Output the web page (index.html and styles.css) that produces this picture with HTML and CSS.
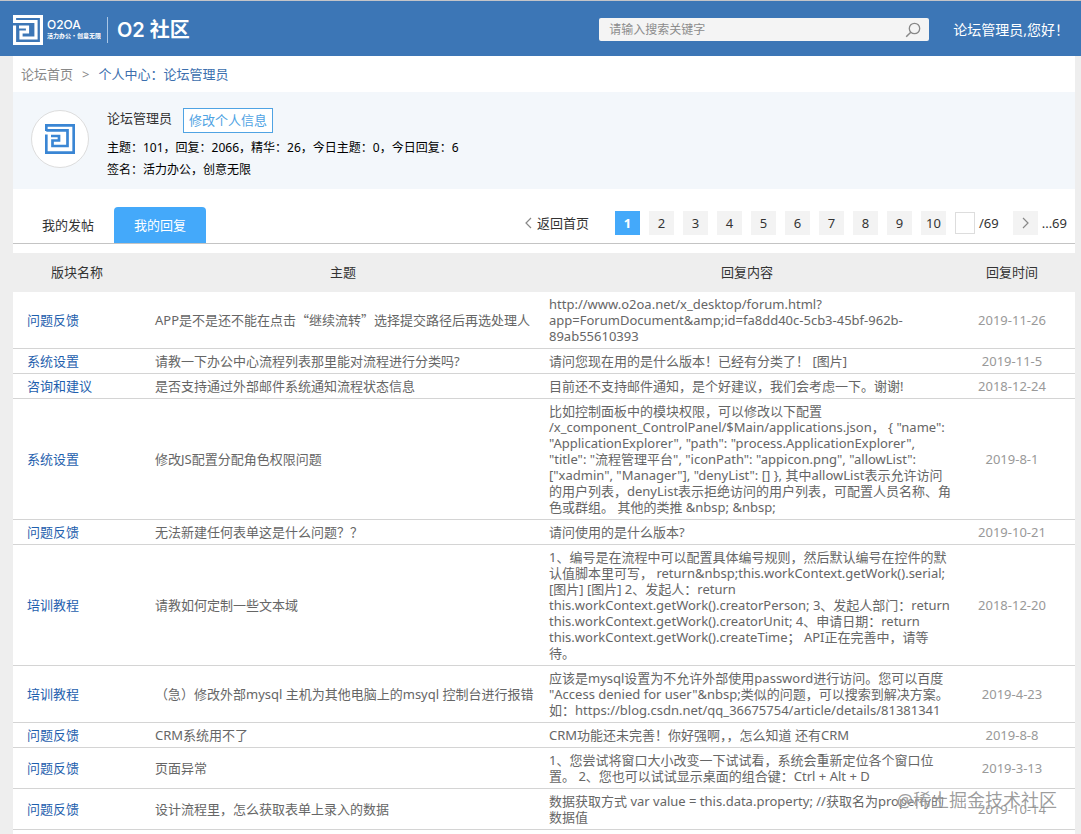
FILE: index.html
```html
<!DOCTYPE html>
<html lang="zh-CN">
<head>
<meta charset="utf-8">
<title>O2 社区</title>
<link rel="stylesheet" href="styles.css">
</head>
<body>
<header class="topbar">
  <a class="brand" href="#">
    <svg class="brand-mark" viewBox="0 0 30 30" aria-hidden="true">
      <path d="M1.500 8V1.500H28.500V28.500H1.500V10.500M1.500 6.500H23V23H8V17H14.500V12H6" fill="none" stroke="#fff" stroke-width="3.200"/>
    </svg>
    <span class="brand-text">
      <svg class="brand-words" viewBox="0 0 54 26" role="img" aria-label="O2OA 活力办公·创意无限">
        <text class="word-name" x="0" y="12">O2OA</text>
        <text class="word-slogan" x="0" y="21">活力办公·创意无限</text>
      </svg>
    </span>
    <span class="brand-site">O2 社区</span>
  </a>
  <form class="search" role="search">
    <input class="search-input" type="text" placeholder="请输入搜索关键字" aria-label="搜索">
    <button class="search-button" type="button" aria-label="搜索">
      <svg viewBox="0 0 16 16" width="16" height="16" aria-hidden="true"><circle cx="9.500" cy="6.500" r="5.200" fill="none" stroke="#888" stroke-width="1.300"/><path d="M5.800 10.200L1.200 14.800" stroke="#888" stroke-width="1.500"/></svg>
    </button>
  </form>
  <span class="greeting">论坛管理员,您好！</span>
</header>

<main class="page">
  <nav class="crumbs" aria-label="位置">
    <a class="crumb-home" href="#">论坛首页</a><span class="crumb-sep">&gt;</span><a class="crumb-here" href="#">个人中心：论坛管理员</a>
  </nav>

  <section class="profile">
    <div class="avatar">
      <svg viewBox="0 0 30 30" width="30" height="30" aria-hidden="true">
        <path d="M1.300 7V1.300H28.700V28.700H1.300V10.500M1.300 6.300H22.500V22H7.500V16.500H14V12H6" fill="none" stroke="#3a86d4" stroke-width="2.700"/>
      </svg>
    </div>
    <div class="profile-info">
      <div class="profile-head"><span class="profile-name">论坛管理员</span><button class="edit" type="button">修改个人信息</button></div>
      <p class="profile-line">主题：101，回复：2066，精华：26，今日主题：0，今日回复：6</p>
      <p class="profile-line">签名：活力办公，创意无限</p>
    </div>
  </section>

  <div class="bar">
    <div class="tabs">
      <button class="tab" type="button">我的发帖</button>
      <button class="tab tab-active" type="button">我的回复</button>
    </div>
    <nav class="pager" aria-label="分页">
      <a class="pager-first" href="#"><svg viewBox="0 0 7 12" width="7" height="12" aria-hidden="true"><path d="M6 1L1 6L6 11" fill="none" stroke="#888" stroke-width="1.200"/></svg>返回首页</a>
      <div class="pages">
        <button class="pg pg-on" type="button">1</button>
        <button class="pg" type="button">2</button>
        <button class="pg" type="button">3</button>
        <button class="pg" type="button">4</button>
        <button class="pg" type="button">5</button>
        <button class="pg" type="button">6</button>
        <button class="pg" type="button">7</button>
        <button class="pg" type="button">8</button>
        <button class="pg" type="button">9</button>
        <button class="pg" type="button">10</button>
        <label class="jump"><input class="jump-input" type="text" aria-label="页码"><span>/69</span></label>
      </div>
      <div class="pager-last"><button class="pg" type="button" aria-label="下一页"><svg viewBox="0 0 7 12" width="7" height="12" aria-hidden="true"><path d="M1 1L6 6L1 11" fill="none" stroke="#888" stroke-width="1.200"/></svg></button><span>...69</span></div>
    </nav>
  </div>

  <table class="replies">
    <thead>
      <tr><th class="c-board">版块名称</th><th class="c-topic">主题</th><th class="c-reply">回复内容</th><th class="c-time">回复时间</th></tr>
    </thead>
    <tbody>
      <tr><td><a href="#">问题反馈</a></td><td>APP是不是还不能在点击<span class="zh">“</span>继续流转<span class="zh">”</span>选择提交路径后再选处理人</td><td>http://www.o2oa.net/x_desktop/forum.html?<br>app=ForumDocument&amp;amp;id=fa8dd40c-5cb3-45bf-962b-<br>89ab55610393</td><td>2019-11-26</td></tr>
      <tr><td><a href="#">系统设置</a></td><td>请教一下办公中心流程列表那里能对流程进行分类吗?</td><td>请问您现在用的是什么版本！已经有分类了！ [图片]</td><td>2019-11-5</td></tr>
      <tr><td><a href="#">咨询和建议</a></td><td>是否支持通过外部邮件系统通知流程状态信息</td><td>目前还不支持邮件通知，是个好建议，我们会考虑一下。谢谢!</td><td>2018-12-24</td></tr>
      <tr><td><a href="#">系统设置</a></td><td>修改JS配置分配角色权限问题</td><td>比如控制面板中的模块权限，可以修改以下配置<br>/x_component_ControlPanel/$Main/applications.json， { "name":<br>"ApplicationExplorer", "path": "process.ApplicationExplorer",<br>"title": "流程管理平台", "iconPath": "appicon.png", "allowList":<br>["xadmin", "Manager"], "denyList": [] }, 其中allowList表示允许访问<br>的用户列表，denyList表示拒绝访问的用户列表，可配置人员名称、角<br>色或群组。 其他的类推 &amp;nbsp; &amp;nbsp;</td><td>2019-8-1</td></tr>
      <tr><td><a href="#">问题反馈</a></td><td>无法新建任何表单这是什么问题？？</td><td>请问使用的是什么版本?</td><td>2019-10-21</td></tr>
      <tr><td><a href="#">培训教程</a></td><td>请教如何定制一些文本域</td><td>1、编号是在流程中可以配置具体编号规则，然后默认编号在控件的默<br>认值脚本里可写， return&amp;nbsp;this.workContext.getWork().serial;<br>[图片] [图片] 2、发起人：return<br>this.workContext.getWork().creatorPerson; 3、发起人部门：return<br>this.workContext.getWork().creatorUnit; 4、申请日期：return<br>this.workContext.getWork().createTime； API正在完善中，请等<br>待。</td><td>2018-12-20</td></tr>
      <tr><td><a href="#">培训教程</a></td><td>（急）修改外部mysql 主机为其他电脑上的msyql 控制台进行报错</td><td>应该是mysql设置为不允许外部使用password进行访问。您可以百度<br>"Access denied for user"&amp;nbsp;类似的问题，可以搜索到解决方案。<br>如：https://blog.csdn.net/qq_36675754/article/details/81381341</td><td>2019-4-23</td></tr>
      <tr><td><a href="#">问题反馈</a></td><td>CRM系统用不了</td><td>CRM功能还未完善！你好强啊，，怎么知道 还有CRM</td><td>2019-8-8</td></tr>
      <tr><td><a href="#">问题反馈</a></td><td>页面异常</td><td>1、您尝试将窗口大小改变一下试试看，系统会重新定位各个窗口位<br>置。 2、您也可以试试显示桌面的组合键：Ctrl + Alt + D</td><td>2019-3-13</td></tr>
      <tr><td><a href="#">问题反馈</a></td><td>设计流程里，怎么获取表单上录入的数据</td><td>数据获取方式 var value = this.data.property; //获取名为property的<br>数据值</td><td>2019-10-14</td></tr>
    </tbody>
  </table>
</main>
<div class="watermark">@稀土掘金技术社区</div>
</body>
</html>
```

FILE: styles.css
```css
* { box-sizing: border-box; }

body {
  margin: 0;
  min-height: 100vh;
  position: relative;
  display: flex;
  flex-direction: column;
  background: #eee;
  color: #333;
  font: 13px/16px "Noto Sans", "Noto Sans CJK SC", sans-serif;
}

a { color: inherit; text-decoration: none; }
p { margin: 0; }
button, input { font: inherit; color: inherit; margin: 0; padding: 0; border: 0; }
svg { display: block; }

/* Top bar */
.topbar {
  display: flex;
  align-items: center;
  height: 56px;
  padding: 2px 12px 0 13px;
  border-top: 1px solid #c4c4c8;
  background: #3c76b6;
  color: #fff;
}
.brand { display: flex; align-items: center; }
.brand-mark { width: 30px; height: 30px; }
.brand-text { padding: 0 6px 0 4px; border-right: 1px solid #a9c6e6; }
.brand-words { width: 54px; height: 26px; fill: #fff; }
.word-name { font: 500 12px "Inter", sans-serif; }
.word-slogan { font: bold 6px "Noto Sans CJK SC", sans-serif; }
.brand-site { margin-left: 9px; font: 600 20px/28px "Inter", "Noto Sans CJK SC", sans-serif; }

.search {
  display: flex;
  align-items: center;
  width: 330px;
  height: 23px;
  margin-left: auto;
  padding: 0 8px 0 10px;
  border-radius: 2px;
  background: #f4f4f4;
}
.search-input { flex: 1; min-width: 0; background: none; font-size: 12px; color: #333; outline: 0; }
.search-input::placeholder { color: #8c8c8c; opacity: 1; }
.search-button { background: none; }
.greeting { margin-left: 24px; font-size: 14px; }

/* Page body */
.page { flex: 1; margin: 0 6px 0 13px; background: #fff; }

.crumbs { display: flex; align-items: center; height: 36px; padding: 0 8px; color: #888; }
.crumb-sep { margin: 0 9px; }
.crumb-here { color: #3c6fae; }

.profile { display: flex; padding: 16px 18px 8px; background: #f3f7fb; }
.avatar {
  display: flex;
  align-items: center;
  justify-content: center;
  width: 58px;
  height: 58px;
  margin: 2px 18px 0 0;
  border: 1px solid #ddd;
  border-radius: 50%;
  background: #fff;
}
.profile-head { display: flex; gap: 11px; height: 29px; }
.profile-name { line-height: 20px; }
.edit { height: 25px; padding: 0 5px 2px; border: 1px solid #4fa3e3; background: #fff; color: #4fa3e3; }
.profile-line { font-size: 12px; line-height: 22px; color: #000; }

/* Tabs and pager */
.bar {
  display: flex;
  align-items: flex-end;
  justify-content: space-between;
  height: 55px;
  padding: 0 8px 0 9px;
  border-bottom: 1px solid #c4c4c4;
}
.tabs { display: flex; }
.tab { height: 36px; padding: 0 20px; background: none; }
.tab-active { border-radius: 4px 4px 0 0; background: #44a9fa; color: #fff; }

.pager { display: flex; align-items: center; height: 24px; margin-bottom: 8px; }
.pager-first { display: flex; align-items: center; gap: 5px; margin-right: 26px; }
.pages { display: flex; gap: 9px; }
.pg { display: flex; align-items: center; justify-content: center; width: 25px; height: 24px; background: #f3f3f3; }
.pg-on { background: #44a9fa; color: #fff; font-weight: bold; }
.jump { display: flex; align-items: center; gap: 4px; }
.jump-input { width: 20px; height: 22px; border: 1px solid #ddd; background: #fff; }
.pager-last { display: flex; align-items: center; gap: 4px; margin-left: 14px; }

/* Replies table */
.replies { width: 100%; margin-top: 9px; border-collapse: collapse; table-layout: fixed; }
.replies th { height: 39px; padding: 0 0 2px; background: #eee; font-weight: normal; }
.c-board { width: 128px; }
.c-time { width: 126px; }
.replies td { padding: 4px 0 4px 14px; border-bottom: 1px solid #d4d4d4; color: #666; vertical-align: middle; white-space: nowrap; }
.replies td:nth-child(1) { color: #1f5fae; }
.replies td:nth-child(3) { padding-left: 4px; }
.replies td:nth-child(4) { padding-left: 0; text-align: center; color: #999; }
.zh { font-family: "Noto Sans CJK SC", sans-serif; }

.watermark {
  position: absolute;
  right: 24px;
  bottom: 21px;
  color: rgba(90, 90, 90, 0.6);
  font-size: 18px;
  line-height: 26px;
  text-shadow: 0 0 2px #fff;
  pointer-events: none;
}
```
